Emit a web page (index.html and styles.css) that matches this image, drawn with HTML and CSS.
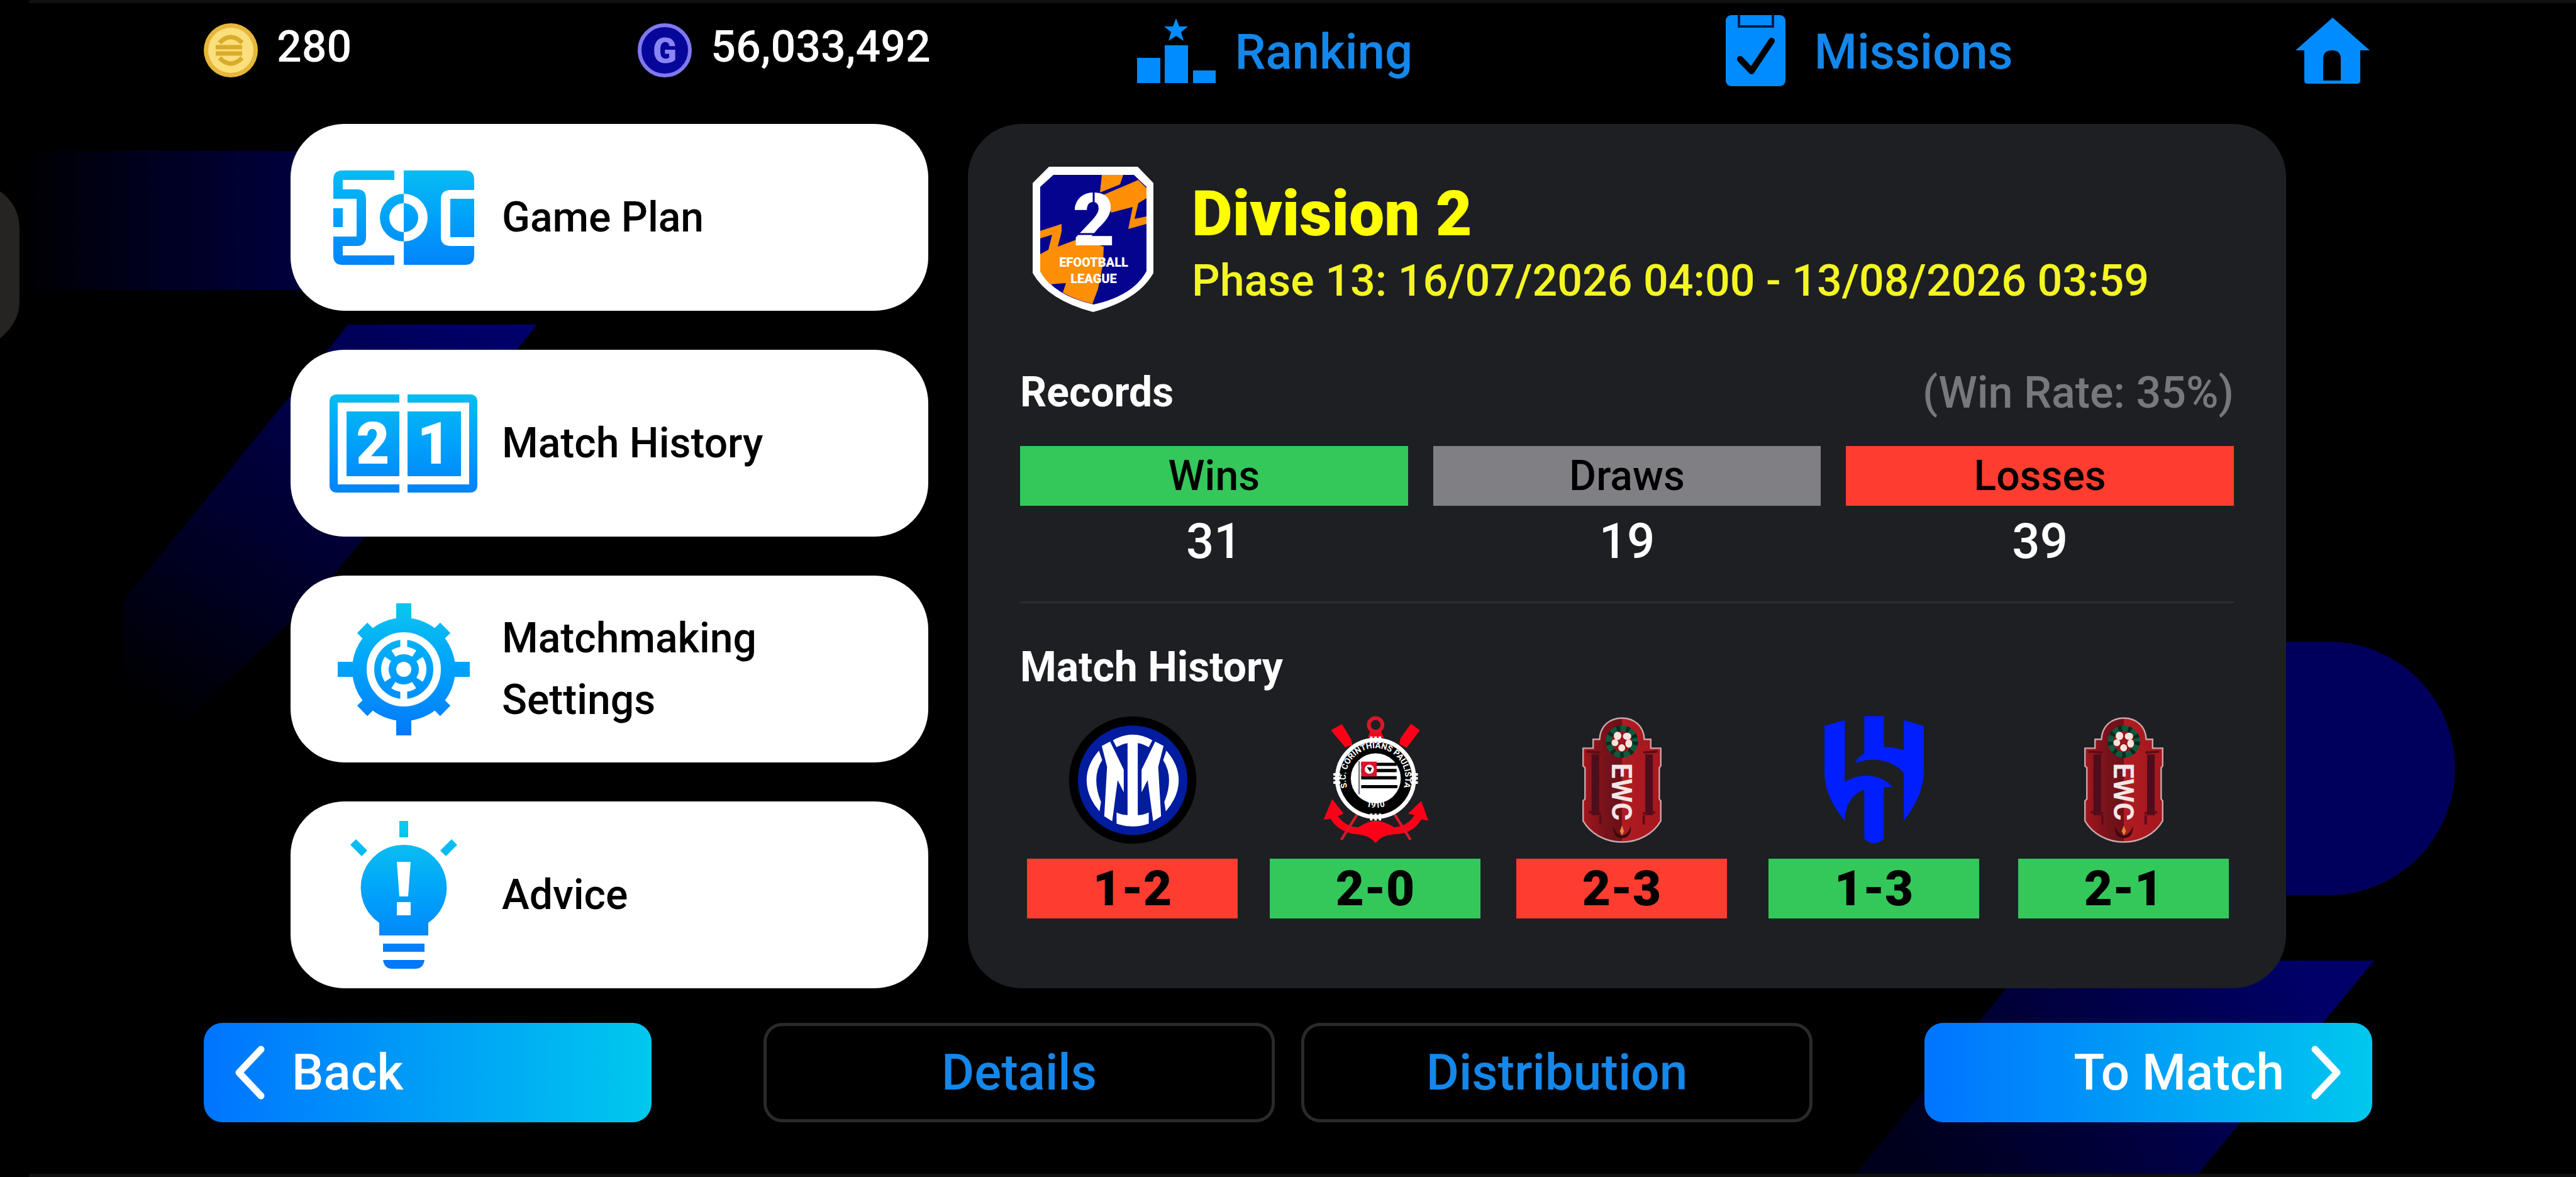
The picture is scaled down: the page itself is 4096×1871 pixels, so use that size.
FILE: index.html
```html
<!DOCTYPE html>
<html lang="en">

<head>
    <meta charset="UTF-8">
    <meta name="viewport" content="width=device-width, initial-scale=1.0">
    <title>eFootball League</title>
    <link rel="stylesheet" href="styles.css">
</head>

<body>
    <svg class="backdrop" viewBox="0 0 4096 1871" preserveAspectRatio="none" aria-hidden="true">
        <defs>
            <linearGradient id="bg-bar" x1="0" x2="1" y1="0" y2="0">
                <stop offset="0" stop-color="#000" />
                <stop offset="0.5" stop-color="#000022" />
                <stop offset="1" stop-color="#000040" />
            </linearGradient>
            <linearGradient id="bg-slash" gradientUnits="userSpaceOnUse" x1="780" y1="480" x2="330" y2="1190">
                <stop offset="0" stop-color="#00006c" />
                <stop offset="0.55" stop-color="#000034" />
                <stop offset="1" stop-color="#000" />
            </linearGradient>
            <linearGradient id="bg-slash2" gradientUnits="userSpaceOnUse" x1="3640" y1="1500" x2="3060" y2="1871">
                <stop offset="0" stop-color="#000068" />
                <stop offset="1" stop-color="#00001c" />
            </linearGradient>
        </defs>
        <rect x="26" y="240" width="470" height="221" fill="url(#bg-bar)" />
        <path d="M554 516H854L500 952L196 1240V955Z" fill="url(#bg-slash)" />
        <path d="M3500 1020H3702A201 201 0 0 1 3702 1423H3500Z" fill="#00005c" />
        <path d="M3226 1527H3775L3491 1871H2947Z" fill="url(#bg-slash2)" />
        <path d="M0 304Q31 326 31 364V480Q31 512 0 538Z" fill="#262422" />
        <rect width="4050" height="5" x="46" fill="#101010" />
        <rect width="4050" height="5" x="46" y="1866" fill="#101010" />
    </svg>

    <!-- shared gradient for the menu icons -->
    <svg class="defs" aria-hidden="true">
        <defs>
            <linearGradient id="sky" gradientUnits="userSpaceOnUse" x1="120" y1="10" x2="120" y2="225">
                <stop offset="0" stop-color="#0cc8ee" />
                <stop offset="0.5" stop-color="#00a2fa" />
                <stop offset="1" stop-color="#0478fa" />
            </linearGradient>
            <linearGradient id="ewc-red" x1="0" x2="1" y1="0" y2="0">
                <stop offset="0" stop-color="#a5161d" />
                <stop offset="0.3" stop-color="#74121a" />
                <stop offset="0.5" stop-color="#6d1016" />
                <stop offset="0.5" stop-color="#b01c22" />
                <stop offset="1" stop-color="#a5161d" />
            </linearGradient>
            <symbol id="ewc" viewBox="0 0 750 750">
                <path d="M375 48C440 48 490 90 493 160H527V207H580V300L572 310V475L580 485V590C540 660 460 702 375 702S210 660 170 590V485L180 475V310L170 300V207H223V160H257C260 90 310 48 375 48Z" fill="url(#ewc-red)" stroke="#c9a5a8" stroke-width="8" />
                <path d="M215 240H255V560H215ZM498 240H538V560H498Z" fill="#4d0d1c" />
                <path d="M188 225L262 230M488 230L562 225M200 545L265 550M485 550L550 545M262 560V610M490 560V610" stroke="#5a0c16" stroke-width="12" />
                <circle cx="375" cy="172" r="70" fill="#94141b" stroke="#0d5a3e" stroke-width="30" />
                <circle cx="375" cy="172" r="70" fill="none" stroke="#0a2a20" stroke-width="30" stroke-dasharray="18 32" />
                <g fill="#fbe3dd">
                    <ellipse cx="352" cy="142" rx="20" ry="22" />
                    <ellipse cx="402" cy="144" rx="22" ry="19" />
                    <ellipse cx="411" cy="182" rx="18" ry="22" />
                    <ellipse cx="374" cy="205" rx="18" ry="19" />
                    <ellipse cx="338" cy="178" rx="18" ry="18" />
                </g>
                <circle cx="375" cy="170" r="12" fill="#a01820" />
                <text class="ewc-text" x="375" y="490" transform="rotate(90 375 437)" text-anchor="middle">EWC</text>
                <path d="M330 620Q345 665 375 668Q405 665 422 620Q425 680 375 682Q325 680 330 620Z" fill="#3c0910" />
                <path d="M375 615L386 645L375 668L364 645Z" fill="#e08a3a" />
            </symbol>
        </defs>
    </svg>

    <header class="topbar">
        <div class="currency">
            <svg class="coin" viewBox="0 0 86 86" aria-hidden="true">
                <circle cx="43" cy="43" r="43" fill="#e6b73a" />
                <circle cx="43" cy="43" r="36" fill="#fbdf7c" />
                <path d="M25 31Q43 13 61 31M25 55Q43 73 61 55M19 38H61M19 48H61" fill="none" stroke="#d9ac2c" stroke-width="7" />
            </svg>
            <span>280</span>
        </div>
        <div class="currency">
            <svg class="coin" viewBox="0 0 86 86" aria-hidden="true">
                <circle cx="43" cy="43" r="40" fill="#06069a" stroke="#7f78ee" stroke-width="6" />
                <text class="coin-g" x="43" y="63" text-anchor="middle">G</text>
            </svg>
            <span>56,033,492</span>
        </div>
        <a class="toplink" href="#ranking">
            <svg class="icon-ranking" viewBox="0 0 125 103" aria-hidden="true">
                <path d="M0 63H37V103H0ZM44 43H81V103H44ZM89 83H125V103H89ZM62 0L67 13H81L70 22L74 36L62 28L50 36L54 22L43 13H57Z" fill="#008cff" />
            </svg>
            <span>Ranking</span>
        </a>
        <a class="toplink missions" href="#missions">
            <svg class="icon-missions" viewBox="0 0 95 113" aria-hidden="true">
                <rect width="95" height="113" rx="9" fill="#008cff" />
                <path d="M21 0V18H75V0" fill="none" stroke="#001c4c" stroke-width="4" />
                <path d="M23 70L41 89L73 41" fill="none" stroke="#000" stroke-width="10" stroke-linecap="round" stroke-linejoin="round" />
            </svg>
            <span>Missions</span>
        </a>
        <a class="toplink" href="#home" aria-label="Home">
            <svg class="icon-home" viewBox="0 0 118 105" aria-hidden="true">
                <path d="M59 0L118 52H103V100Q103 105 98 105H19Q14 105 14 100V52H0ZM44 100H72V66Q72 52 58 52T44 66Z" fill="#008cff" fill-rule="evenodd" />
            </svg>
        </a>
    </header>

    <main class="content">
        <nav class="menu">
            <button class="card" type="button">
                <svg viewBox="0 0 240 240" aria-hidden="true">
                    <g fill="url(#sky)">
                        <path d="M105 45H22Q8 45 8 60V90H45V150H8V180Q8 195 22 195H105V180H23V165H46Q60 165 60 150V90Q60 75 46 75H23V60H105Z" />
                        <path d="M8 105H23V135H8ZM194 90H232V151H194Z" />
                        <path d="M120 82A38 38 0 0 0 120 158V143A23 23 0 0 1 120 97Z" />
                        <path d="M120 45H218Q232 45 232 60V76H195Q179 76 179 91V150Q179 165 195 165H232V180Q232 195 218 195H120Z" />
                    </g>
                    <path d="M120 82A38 38 0 0 1 120 158V143A23 23 0 0 0 120 97Z" fill="#fff" />
                </svg>
                <span>Game Plan</span>
            </button>
            <button class="card" type="button">
                <svg viewBox="0 0 240 240" aria-hidden="true">
                    <g fill="url(#sky)">
                        <path d="M113 42H14Q2 42 2 54V186Q2 198 14 198H113V185H15V55H113Z" />
                        <path d="M126 42H225Q237 42 237 54V186Q237 198 225 198H126V185H224V55H126Z" />
                        <path d="M29 69H113V172H29ZM126 69H211V172H126Z" />
                    </g>
                    <text class="score-digit" x="71" y="152" text-anchor="middle">2</text>
                    <text class="score-digit" x="168" y="152" text-anchor="middle">1</text>
                </svg>
                <span>Match History</span>
            </button>
            <button class="card" type="button">
                <svg viewBox="0 0 240 240" aria-hidden="true">
                    <path d="M54 54L186 186M186 54L54 186" fill="none" stroke="url(#sky)" stroke-width="23" />
                    <path d="M108 15H132V225H108ZM15 108H225V132H15Z" fill="url(#sky)" />
                    <circle cx="120" cy="120" r="82" fill="url(#sky)" />
                    <circle cx="120" cy="120" r="53" fill="none" stroke="#fff" stroke-width="12" />
                    <circle cx="120" cy="120" r="30" fill="none" stroke="#fff" stroke-width="12" stroke-dasharray="35 12.1" stroke-dashoffset="17.5" />
                    <path d="M120 70V90M120 150V170" stroke="#fff" stroke-width="11" />
                    <circle cx="120" cy="120" r="12" fill="#fff" />
                </svg>
                <span>Matchmaking<br>Settings</span>
            </button>
            <button class="card" type="button">
                <svg viewBox="0 0 240 240" aria-hidden="true">
                    <g fill="url(#sky)">
                        <path d="M113 2H127V28H113Z" />
                        <path d="M44 31L62 49L53 58L35 40ZM196 31L178 49L187 58L205 40Z" />
                        <path d="M120 40A68 68 0 0 1 159 164V184H81V164A68 68 0 0 1 120 40Z" />
                        <path d="M87 197H153V210H87ZM87 223H153Q151 237 138 237H102Q89 237 87 223Z" />
                    </g>
                    <path d="M109 67H131L127 122H113ZM109 131H131V152H109Z" fill="#fff" />
                </svg>
                <span>Advice</span>
            </button>
        </nav>

        <section class="panel">
            <div class="division">
                <svg class="shield" viewBox="0 0 193 231" aria-hidden="true">
                    <path d="M26 0H167L192 26V169Q168 212 96 231Q24 212 0 169V26Z" fill="#fff" />
                    <path d="M33 13H161L181 32V166Q160 205 97 219Q34 205 12 166V32Z" fill="#04048e" />
                    <g fill="#ff8f06">
                        <path d="M110 13H144L139 28L107 41ZM112 45L168 21L181 34V50L168 58L162 83L181 79V91L152 99L159 64L125 73Z" />
                        <path d="M12 102L46 91V103L40 127L72 115L113 127L112 154L104 194L95 218Q66 211 48 200L53 185L28 187Q18 178 12 166V139L25 132L31 108L12 114Z" />
                    </g>
                    <text class="shield-num" x="97" y="125" text-anchor="middle">2</text>
                    <path d="M97 40V60M68 107H128" stroke="#04048e" stroke-width="3" />
                    <text class="shield-text" x="97" y="159" text-anchor="middle">EFOOTBALL</text>
                    <text class="shield-text" x="97" y="185" text-anchor="middle">LEAGUE</text>
                </svg>
                <div>
                    <h1>Division 2</h1>
                    <p>Phase 13: 16/07/2026 04:00 - 13/08/2026 03:59</p>
                </div>
            </div>

            <div class="records-head">
                <h2>Records</h2>
                <span class="rate">(Win Rate: 35%)</span>
            </div>
            <dl class="records">
                <div>
                    <dt class="win">Wins</dt>
                    <dd>31</dd>
                </div>
                <div>
                    <dt class="draw">Draws</dt>
                    <dd>19</dd>
                </div>
                <div>
                    <dt class="loss">Losses</dt>
                    <dd>39</dd>
                </div>
            </dl>

            <h2 class="history-title">Match History</h2>
            <ul class="history">
                <li>
                    <svg viewBox="0 0 750 750" role="img" aria-label="Inter">
                        <circle cx="375" cy="375" r="336" fill="#000" />
                        <circle cx="375" cy="376" r="289" fill="#011c9e" />
                        <g fill="#fff">
                            <path d="M271 165Q375 105 479 165L460 202Q430 184 402 180V560Q430 560 460 546V605Q375 635 290 605V546Q320 560 348 560V180Q320 184 290 202Z" />
                            <path d="M212 195L256 172L328 320V440L296 375L267 592L225 566L240 305Z" />
                            <path d="M538 195L494 172L422 320V440L454 375L483 592L525 566L510 305Z" />
                            <path d="M197 220Q132 295 132 375Q132 462 200 540L208 490Q183 430 183 375Q183 320 214 270Z" />
                            <path d="M553 220Q618 295 618 375Q618 462 550 540L542 490Q567 430 567 375Q567 320 536 270Z" />
                        </g>
                    </svg>
                    <span class="loss">1-2</span>
                </li>
                <li>
                    <svg viewBox="-25 0 750 750" role="img" aria-label="Corinthians">
                        <defs>
                            <path id="ring-top" d="M229 463A157 157 0 1 1 472 463" />
                            <path id="ring-bottom" d="M230 475A182 182 0 0 0 472 475" />
                        </defs>
                        <g fill="#fd0018">
                            <path d="M115 112L173 80L222 160L228 190L190 202ZM585 112L537 78L482 155L476 185L515 205Z" />
                            <path d="M122 475L182 552L152 565Q190 620 260 625Q310 590 350 590Q395 590 450 625Q525 615 556 560L522 552L592 485L630 590L592 582Q550 660 440 662Q380 668 350 708Q325 670 260 662Q160 655 112 578L76 585Z" />
                            <path d="M312 150L322 115H378L392 150Z" />
                        </g>
                        <path d="M255 555L170 690M450 555L535 690" stroke="#d81828" stroke-width="14" />
                        <circle cx="351" cy="84" r="36" fill="none" stroke="#dc1527" stroke-width="20" />
                        <circle cx="351" cy="366" r="203" fill="#000" stroke="#fff" stroke-width="22" />
                        <path d="M328 145V180M351 145V180M374 145V180M328 552V588M351 552V588M374 552V588M128 345H165M128 366H165M128 388H165M537 345H574M537 366H574M537 388H574" stroke="#fff" stroke-width="13" />
                        <circle cx="352" cy="366" r="132" fill="#fff" />
                        <path d="M275 292H462M275 325H462M275 363H462M275 410H466" stroke="#000" stroke-width="17" />
                        <path d="M264 275V450" stroke="#777" stroke-width="8" />
                        <rect x="275" y="278" width="82" height="78" fill="#d9142c" />
                        <circle cx="318" cy="318" r="24" fill="#fff" />
                        <path d="M304 306L332 310L322 332Z" fill="#111" />
                        <text class="ring-text"><textPath href="#ring-top" startOffset="50%" text-anchor="middle">S.C. CORINTHIANS PAULISTA</textPath></text>
                        <text class="ring-text"><textPath href="#ring-bottom" startOffset="50%" text-anchor="middle">1910</textPath></text>
                    </svg>
                    <span class="win">2-0</span>
                </li>
                <li>
                    <svg viewBox="0 0 750 750" role="img" aria-label="EWC">
                        <use href="#ewc" />
                    </svg>
                    <span class="loss">2-3</span>
                </li>
                <li>
                    <svg viewBox="-33 0 750 750" role="img" aria-label="Al Hilal">
                        <path d="M80 90L187 58V385Q250 350 300 352Q390 355 440 412H393V685Q380 700 342 710Q305 700 290 685V425Q190 465 187 590Q80 460 80 340Z" fill="#001eff" />
                        <path d="M290 38H393V200Q450 202 498 218V58L604 90V340Q600 460 498 590V335Q430 268 340 268Q290 268 240 285Q260 250 290 235Z" fill="#001eff" />
                    </svg>
                    <span class="win">1-3</span>
                </li>
                <li>
                    <svg viewBox="0 0 750 750" role="img" aria-label="EWC">
                        <use href="#ewc" />
                    </svg>
                    <span class="win">2-1</span>
                </li>
            </ul>
        </section>
    </main>

    <footer class="actions">
        <button class="btn-main" type="button">
            <svg viewBox="0 0 50 86" aria-hidden="true">
                <path d="M43 6L8 43L43 80" />
            </svg>
            Back
        </button>
        <div class="middle">
            <button class="btn-line" type="button">Details</button>
            <button class="btn-line" type="button">Distribution</button>
        </div>
        <button class="btn-main next" type="button">
            To Match
            <svg viewBox="0 0 50 86" aria-hidden="true">
                <path d="M7 6L42 43L7 80" />
            </svg>
        </button>
    </footer>
</body>

</html>
```
FILE: styles.css
```css
* {
    margin: 0;
    padding: 0;
    box-sizing: border-box;
}

body {
    position: relative;
    min-height: 100vh;
    background-color: #000;
    color: #fff;
    font-family: Roboto, "Liberation Sans", sans-serif;
    font-weight: 500;
    overflow: hidden;
}

button {
    font: inherit;
    border: none;
    cursor: pointer;
}

svg {
    flex: none;
    display: block;
}

.backdrop {
    position: absolute;
    top: 0;
    left: 0;
    width: 100%;
    height: 100%;
    z-index: -1;
}

.defs {
    position: absolute;
    width: 0;
    height: 0;
}

/* top bar */
.topbar {
    display: grid;
    grid-template-columns: 690fr 794fr 935fr 906fr 118fr;
    align-items: center;
    height: 160px;
    padding: 0 328px 0 324px;
}

.currency {
    display: flex;
    align-items: center;
    gap: 30px;
    font-size: 70px;
    line-height: 80px;
}

.currency span {
    padding-bottom: 12px;
}

.coin {
    width: 86px;
    height: 86px;
}

.coin-g {
    font-size: 56px;
    font-weight: 900;
    fill: #8b84f4;
}

.toplink {
    display: flex;
    align-items: center;
    gap: 30px;
    color: #1487ea;
    font-size: 78px;
    line-height: 90px;
    text-decoration: none;
}

.toplink span {
    padding-top: 6px;
}

.missions {
    gap: 46px;
}

.icon-ranking {
    width: 125px;
    height: 103px;
}

.icon-missions {
    width: 95px;
    height: 113px;
}

.icon-home {
    width: 118px;
    height: 105px;
}

/* menu and panel */
.content {
    display: grid;
    grid-template-columns: 1014fr 2096fr;
    gap: 63px;
    padding: 37px 461px 0 462px;
}

.menu {
    display: flex;
    flex-direction: column;
    gap: 62px;
}

.card {
    display: flex;
    align-items: center;
    gap: 36px;
    height: 297px;
    padding: 0 60px;
    border-radius: 85px;
    background-color: #fff;
    color: #000;
    font-size: 66px;
    line-height: 98px;
    text-align: left;
}

.card svg {
    width: 240px;
    height: 240px;
}

.score-digit {
    font-size: 92px;
    font-weight: 900;
    fill: #fff;
}

.panel {
    padding: 68px 83px 0;
    border-radius: 85px;
    background-color: #1d1f23;
}

.division {
    display: flex;
    align-items: flex-end;
    gap: 60px;
    padding-left: 20px;
    color: #ffff00;
}

.shield {
    width: 193px;
    height: 231px;
}

.shield-num {
    font-size: 116px;
    font-weight: 900;
    fill: #fff;
}

.shield-text {
    font-size: 20px;
    font-weight: 900;
    fill: #fff;
}

h1 {
    font-size: 100px;
    font-weight: 900;
    line-height: 112px;
}

.division p {
    color: #f4f622;
    font-size: 70px;
    line-height: 100px;
}

h2 {
    font-size: 66px;
    font-weight: 700;
    line-height: 80px;
}

.records-head {
    display: flex;
    justify-content: space-between;
    margin-top: 88px;
}

.rate {
    color: #77787c;
    font-size: 70px;
    line-height: 80px;
}

.records {
    display: grid;
    grid-template-columns: repeat(3, 1fr);
    gap: 40px;
    margin-top: 45px;
    padding-bottom: 38px;
    border-bottom: 3px solid #2b2d31;
    text-align: center;
}

.records dt {
    color: #000;
    font-size: 66px;
    line-height: 95px;
}

.records dd {
    font-size: 78px;
    line-height: 114px;
}

.win {
    background-color: #34c85a;
}

.draw {
    background-color: #808084;
}

.loss {
    background-color: #ff3c30;
}

.history-title {
    margin-top: 62px;
}

.history {
    display: grid;
    grid-template-columns: 386fr 392fr 401fr 397fr 335fr;
    margin-top: 26px;
    padding: 0 8px 0 11px;
    list-style: none;
}

.history li {
    display: flex;
    flex-direction: column;
    align-items: center;
    gap: 12px;
    width: 335px;
}

.history svg {
    width: 226px;
    height: 226px;
}

.history span {
    width: 100%;
    color: #000;
    font-size: 78px;
    font-weight: 900;
    line-height: 95px;
    text-align: center;
}

.ring-text {
    font-size: 44px;
    font-weight: 700;
    fill: #fff;
}

.ewc-text {
    font-size: 145px;
    font-weight: 700;
    fill: #f3e6e6;
}

/* bottom buttons */
.actions {
    display: grid;
    grid-template-columns: 712fr 1668fr 712fr;
    gap: 178px;
    padding: 55px 324px 0;
    font-size: 80px;
}

.middle {
    display: grid;
    grid-template-columns: 1fr 1fr;
    gap: 42px;
}

.btn-main,
.btn-line {
    height: 158px;
    border-radius: 30px;
}

.btn-main {
    display: flex;
    align-items: center;
    gap: 42px;
    padding: 0 48px;
    background: linear-gradient(to right, #0074ff, #00c8ee);
    color: #fff;
}

.btn-main svg {
    width: 50px;
    height: 86px;
    fill: none;
    stroke: #fff;
    stroke-width: 11;
    stroke-linecap: round;
    stroke-linejoin: round;
}

.next {
    justify-content: flex-end;
}

.btn-line {
    border: 5px solid #2a2a2b;
    background-color: #000;
    color: #1487ea;
}
```
